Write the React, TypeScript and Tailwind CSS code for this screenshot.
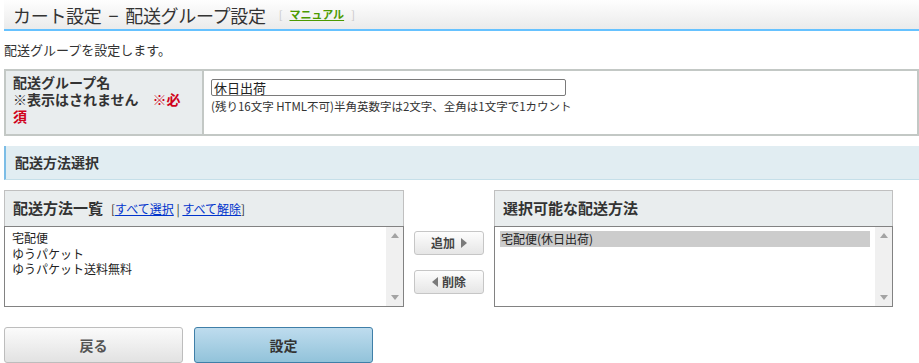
import React from "react";

const font = "font-['Noto_Sans_CJK_JP',sans-serif]";

function ScrollBar() {
  return (
    <div className="w-[17px] shrink-0 bg-[#f0f0f0] flex flex-col items-center justify-between pt-[6px] pb-[6px]">
      <svg width="8" height="5" viewBox="0 0 8 5">
        <path d="M4 0 L8 5 L0 5 Z" fill="#a3a3a3" />
      </svg>
      <svg width="8" height="5" viewBox="0 0 8 5">
        <path d="M0 0 L8 0 L4 5 Z" fill="#a3a3a3" />
      </svg>
    </div>
  );
}

function Arrow({ dir }: { dir: "left" | "right" }) {
  return (
    <svg width="6" height="10" viewBox="0 0 6 10">
      {dir === "right" ? (
        <path d="M0 0 L6 5 L0 10 Z" fill="#7a7a7a" />
      ) : (
        <path d="M6 0 L0 5 L6 10 Z" fill="#7a7a7a" />
      )}
    </svg>
  );
}

export default function App() {
  return (
    <div className={`${font} w-[919px] h-[363px] overflow-hidden bg-white pl-[4px] text-[#333]`}>
      {/* Title bar */}
      <div className="flex items-center h-[31px] border-b-2 border-[#66c2ff] bg-gradient-to-b from-[#fefefe] to-[#ebebeb] pl-[9px]">
        <h1 className="text-[18px] leading-[20px] text-[#333] tracking-[-0.3px]">
          カート設定<span className="mx-[7px]">−</span>配送グループ設定
        </h1>
        <span className="ml-[13px] text-[11px] text-[#c8c8c8]">[</span>
        <a className="ml-[7px] text-[11px] font-bold text-[#4c9a00] underline">マニュアル</a>
        <span className="ml-[7px] text-[11px] text-[#c8c8c8]">]</span>
      </div>

      <p className="mt-[10px] mb-[10px] text-[13px] leading-[18px]">配送グループを設定します。</p>

      {/* Group name row */}
      <div className="flex h-[67px] border-2 border-[#c3c8c5]">
        <div className="w-[198px] shrink-0 bg-[#e9edee] border-r-2 border-[#c3c8c5] pl-[7px] pr-[10px] pt-[3px] text-[14px] font-bold leading-[17px]">
          <div>配送グループ名</div>
          <div className="flex">
            <span>※表示はされません</span>
            <span className="ml-[14px] text-[#d0021b]">※必</span>
          </div>
          <div className="text-[#d0021b]">須</div>
        </div>
        <div className="flex-1 pl-[7px] pt-[8px]">
          <input
            defaultValue="休日出荷"
            className="block w-[355px] h-[17px] border border-[#7a7a7a] rounded-[2px] px-[2px] text-[13px] leading-[15px] text-[#222] outline-none"
          />
          <p className="mt-[3px] text-[11.5px] leading-[14px]">
            (残り16文字 HTML不可)半角英数字は2文字、全角は1文字で1カウント
          </p>
        </div>
      </div>

      {/* Section header */}
      <div className="mt-[10px] h-[34px] flex items-center bg-[#e1edf2] border-l-2 border-l-[#7cbde6] border-b border-b-[#c5dfe9] pl-[9px] text-[14px] font-bold">
        配送方法選択
      </div>

      {/* Lists */}
      <div className="mt-[10px] flex items-start">
        <div className="w-[400px] shrink-0">
          <div className="h-[36px] flex items-center border border-b-0 border-[#c0c0c0] bg-[#e9edee] pl-[8px]">
            <span className="text-[15px] font-bold">配送方法一覧</span>
            <span className="ml-[8px] text-[12px]">
              [<a className="text-[#0033cc] underline">すべて選択</a> | <a className="text-[#0033cc] underline">すべて解除</a>]
            </span>
          </div>
          <div className="h-[81px] flex border border-[#828282]">
            <div className="flex-1 pl-[7px] pt-[3px] text-[12px] leading-[15.5px] text-[#222]">
              <div>宅配便</div>
              <div>ゆうパケット</div>
              <div>ゆうパケット送料無料</div>
            </div>
            <ScrollBar />
          </div>
        </div>

        <div className="w-[70px] mx-[10px] mt-[41px] flex flex-col gap-[15px]">
          <button className="h-[24px] flex items-center justify-center gap-[6px] rounded-[3px] border border-[#c6c6c6] bg-gradient-to-b from-[#fdfdfd] to-[#e6e6e6] text-[12px] font-bold text-[#444]">
            追加 <Arrow dir="right" />
          </button>
          <button className="h-[24px] flex items-center justify-center gap-[4px] rounded-[3px] border border-[#c6c6c6] bg-gradient-to-b from-[#fdfdfd] to-[#e6e6e6] text-[12px] font-bold text-[#444]">
            <Arrow dir="left" /> 削除
          </button>
        </div>

        <div className="w-[399px] shrink-0">
          <div className="h-[36px] flex items-center border border-b-0 border-[#c0c0c0] bg-[#e9edee] pl-[8px]">
            <span className="text-[15px] font-bold">選択可能な配送方法</span>
          </div>
          <div className="h-[81px] flex border border-[#828282]">
            <div className="flex-1 pl-[5px] pr-[5px] pt-[4px] text-[12px] leading-[16px] text-[#222]">
              <div className="h-[16px] bg-[#cccccc] pl-[1px]">宅配便(休日出荷)</div>
            </div>
            <ScrollBar />
          </div>
        </div>
      </div>

      {/* Footer buttons */}
      <div className="mt-[20px] flex gap-[11px]">
        <button className="w-[179px] h-[36px] rounded-[3px] border border-[#bdbdbd] bg-gradient-to-b from-[#fbfbfb] to-[#e2e2e2] text-[14px] font-bold text-[#555]">
          戻る
        </button>
        <button className="w-[179px] h-[36px] rounded-[3px] border border-[#3f7fa8] bg-gradient-to-b from-[#bedcee] to-[#92c3da] text-[14px] font-bold text-[#333]">
          設定
        </button>
      </div>
    </div>
  );
}
